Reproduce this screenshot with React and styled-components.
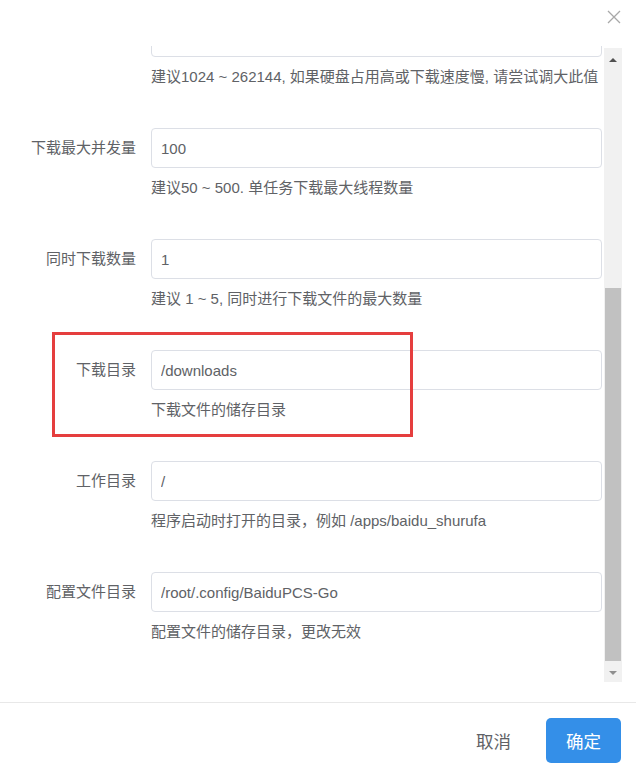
import React from 'react';
import styled, { createGlobalStyle, css } from 'styled-components';

const GlobalStyle = createGlobalStyle`
  html, body {
    margin: 0;
    padding: 0;
    background: #fff;
  }
  body {
    font-family: "Liberation Sans", "Noto Sans CJK SC", sans-serif;
    color: #606266;
  }
`;

const fields = [
  { label: '', value: '', help: '建议1024 ~ 262144, 如果硬盘占用高或下载速度慢, 请尝试调大此值' },
  { label: '下载最大并发量', value: '100', help: '建议50 ~ 500. 单任务下载最大线程数量' },
  { label: '同时下载数量', value: '1', help: '建议 1 ~ 5, 同时进行下载文件的最大数量' },
  { label: '下载目录', value: '/downloads', help: '下载文件的储存目录', marked: true },
  { label: '工作目录', value: '/', help: '程序启动时打开的目录，例如 /apps/baidu_shurufa' },
  { label: '配置文件目录', value: '/root/.config/BaiduPCS-Go', help: '配置文件的储存目录，更改无效' },
];

const Dialog = styled.div`
  width: 636px;
  height: 773px;
  display: flex;
  flex-direction: column;
  background: #fff;
  overflow: hidden;
`;

const Header = styled.div`
  height: 46px;
  display: flex;
  justify-content: flex-end;
  align-items: flex-start;
  padding: 10px 15px 0 0;
  box-sizing: border-box;
`;

const CloseButton = styled.button`
  width: 14px;
  height: 14px;
  padding: 0;
  border: none;
  background: transparent;
  display: block;
  cursor: pointer;
  svg { display: block; }
`;

const Body = styled.div`
  height: 636px;
  margin-bottom: 20px;
  padding-right: 14px;
  display: flex;
`;

const Viewport = styled.div`
  flex: 1;
  overflow: hidden;
`;

// content is scrolled down a bit, first field is cut at the top
const Form = styled.div`
  margin-top: -29px;
  padding-right: 2px;
`;

const Row = styled.div`
  display: grid;
  grid-template-columns: 136px 1fr;
  column-gap: 15px;
  margin-bottom: 41px;
  position: relative;

  ${p => p.$marked && css`
    &::after {
      content: "";
      position: absolute;
      top: -18px;
      left: 52px;
      width: 361px;
      height: 105px;
      box-sizing: border-box;
      border: 3px solid #e53e3e;
      pointer-events: none;
    }
  `}
`;

const Label = styled.label`
  font-size: 15px;
  line-height: 40px;
  color: #606266;
  text-align: right;
  white-space: nowrap;
`;

const Input = styled.input`
  width: 100%;
  height: 40px;
  box-sizing: border-box;
  border: 1px solid #dcdfe6;
  border-radius: 4px;
  padding: 0 9px;
  font-family: inherit;
  font-size: 15px;
  color: #606266;
  outline: none;
  background: #fff;
`;

const Help = styled.div`
  grid-column: 2;
  margin-top: 10px;
  font-size: 15px;
  line-height: 20px;
  color: #606266;
  white-space: nowrap;
`;

const Scrollbar = styled.div`
  width: 18px;
  margin-top: 2px;
  background: #f1f1f1;
  display: flex;
  flex-direction: column;
`;

const ArrowButton = styled.div`
  height: 17px;
  display: flex;
  align-items: center;
  justify-content: center;

  &::before {
    content: "";
    width: 0;
    height: 0;
    border-left: 4px solid transparent;
    border-right: 4px solid transparent;
    ${p => p.$down
      ? css`border-top: 4px solid #8f8f8f; margin-top: -2px;`
      : css`border-bottom: 4px solid #505050; margin-top: 6px;`}
  }
`;

const Track = styled.div`
  flex: 1;
  display: flex;
  flex-direction: column;
  padding: 0 1px 0 1px;
`;

const Thumb = styled.div`
  margin-top: ${p => p.$offset}px;
  height: ${p => p.$size}px;
  background: #c1c1c1;
`;

const Footer = styled.div`
  border-top: 1px solid #e8e8e8;
  flex: 1;
  display: flex;
  justify-content: flex-end;
  align-items: flex-start;
  gap: 15px;
  padding: 15px 15px 0 0;
`;

const Button = styled.button`
  width: 75px;
  height: 45px;
  border-radius: 5px;
  border: none;
  font-family: "Liberation Sans", "Noto Sans CJK SC", sans-serif;
  font-size: 17.5px;
  cursor: pointer;
  background: ${p => (p.$primary ? '#348fe8' : 'transparent')};
  color: ${p => (p.$primary ? '#fff' : '#606266')};
`;

function CloseIcon() {
  return (
    <svg width="14" height="14" viewBox="0 0 14 14">
      <path d="M1 1 L13 13 M13 1 L1 13" stroke="#a8a8a8" strokeWidth="1.3" fill="none" />
    </svg>
  );
}

export default function App() {
  return (
    <>
      <GlobalStyle />
      <Dialog>
        <Header>
          <CloseButton aria-label="关闭">
            <CloseIcon />
          </CloseButton>
        </Header>
        <Body>
          <Viewport>
            <Form>
              {fields.map((f, i) => (
                <Row key={i} $marked={f.marked}>
                  <Label>{f.label}</Label>
                  <Input defaultValue={f.value} readOnly />
                  <Help>{f.help}</Help>
                </Row>
              ))}
            </Form>
          </Viewport>
          <Scrollbar>
            <ArrowButton />
            <Track>
              <Thumb $offset={223} $size={373} />
            </Track>
            <ArrowButton $down />
          </Scrollbar>
        </Body>
        <Footer>
          <Button>取消</Button>
          <Button $primary>确定</Button>
        </Footer>
      </Dialog>
    </>
  );
}
